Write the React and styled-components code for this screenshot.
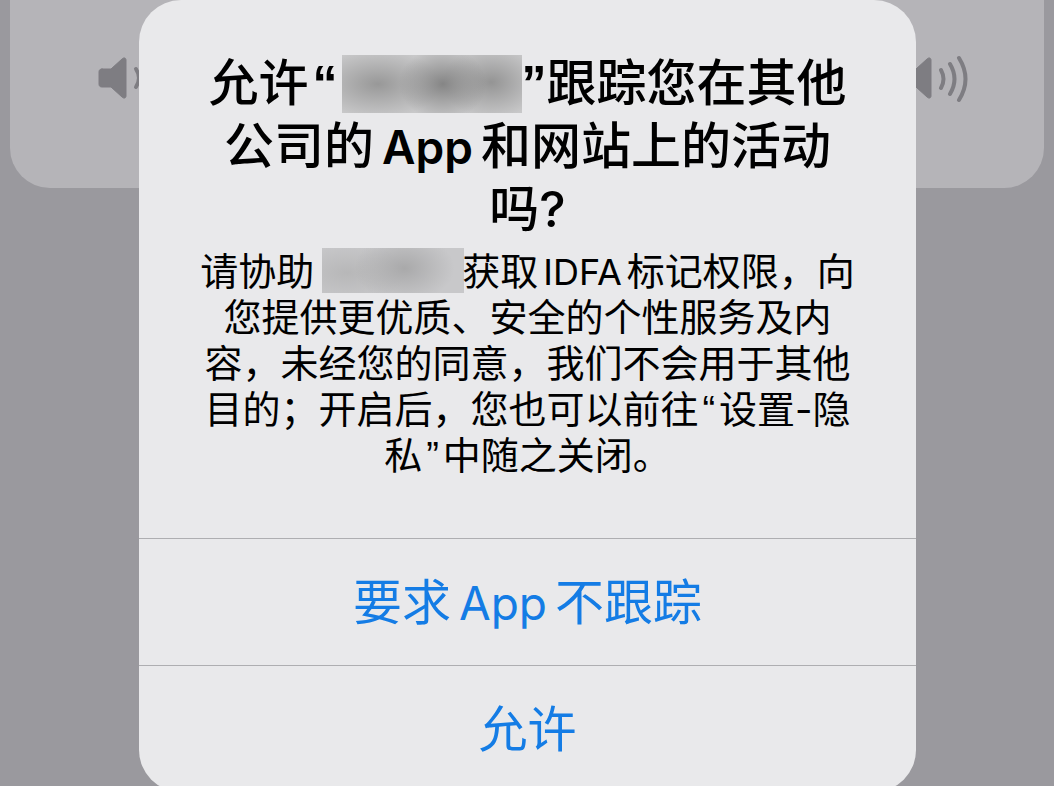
import React from "react";
import styled, { createGlobalStyle } from "styled-components";

const GlobalStyle = createGlobalStyle`
  * {
    box-sizing: border-box;
  }

  body {
    margin: 0;
    background: #9a999e;
    font-family: Inter, "Noto Sans CJK SC", sans-serif;
  }
`;

const Screen = styled.div`
  display: grid;
  align-items: start;
  min-height: 100vh;
  overflow: hidden;
`;

const VolumePanel = styled.section`
  grid-area: 1 / 1;
  display: flex;
  justify-content: space-between;
  align-items: flex-start;
  height: 188px;
  margin: 0 10px;
  padding: 52px 73px 0 84px;
  border-radius: 0 0 40px 40px;
  background: #b5b4b8;
`;

const SpeakerIcon = styled.svg`
  width: 72px;
  height: 52px;
  fill: #7e7d82;
  stroke: #7e7d82;
  stroke-linecap: round;
  stroke-linejoin: round;
`;

const Dialog = styled.main`
  grid-area: 1 / 1;
  margin: 0 138px 0 139px;
  border-radius: 42px;
  background: #e9e9eb;
  overflow: hidden;
`;

const Message = styled.div`
  height: 538px;
  padding-top: 52px;
  color: #000;
  text-align: center;
  white-space: nowrap;
`;

const Title = styled.h1`
  margin: 0;
  font-size: 50px;
  font-weight: 500;
  line-height: 63px;
`;

const Description = styled.p`
  margin: 7px 0 0;
  font-size: 38px;
  line-height: 46px;
`;

const Latin = styled.span`
  margin: 0 ${(props) => (props.$large ? "8px" : "5px")};
  font-size: ${(props) => (props.$large ? "46px" : "36px")};
  font-weight: ${(props) => (props.$bold ? 600 : 400)};
  line-height: 1;
`;

const Quote = styled.span`
  margin: 0 ${(props) => (props.$flush ? "0" : "4px")};
  font-family: "Liberation Sans", sans-serif;
  font-weight: ${(props) => (props.$bold ? 700 : 400)};
  line-height: 1;
`;

const HiddenName = styled.span`
  display: inline-block;
  vertical-align: top;
  width: ${(props) => (props.$large ? "180px" : "142px")};
  height: ${(props) => (props.$large ? "58px" : "45px")};
  margin: ${(props) => (props.$large ? "3px 0 0" : "0 -2px 0 8px")};
  background: ${(props) =>
    props.$large
      ? `radial-gradient(ellipse 44px 36px at 56% 50%, #858585 0%, transparent 100%),
         radial-gradient(ellipse 64px 34px at 20% 50%, #989898 0%, transparent 100%),
         radial-gradient(ellipse 50px 36px at 83% 47%, #949494 0%, transparent 100%),
         #c8c8c9`
      : `radial-gradient(ellipse 50px 34px at 58% 45%, #a9a9aa 0%, transparent 100%),
         radial-gradient(ellipse 60px 30px at 18% 55%, #b7b7b8 0%, transparent 100%),
         #c8c8ca`};
`;

const ActionButton = styled.button`
  display: block;
  width: 100%;
  height: 127px;
  padding: 0;
  border: 0;
  border-top: 1px solid #aeaeb1;
  background: transparent;
  color: #147ce5;
  font-family: inherit;
  font-size: 49px;
  line-height: 63px;
`;

function Speaker({ children }) {
  return (
    <SpeakerIcon viewBox="0 0 72 52" aria-hidden="true">
      <path
        d="M8 17h9l11-10c2-2 4-1 4 1v36c0 2-2 3-4 1L17 35H8c-2 0-3-1-3-3V20c0-2 1-3 3-3z"
        strokeWidth="1"
      />
      {children}
    </SpeakerIcon>
  );
}

function App() {
  return (
    <>
      <GlobalStyle />
      <Screen lang="zh-CN">
        <VolumePanel>
          <Speaker>
            <path d="M42 17q6 9 0 18" fill="none" strokeWidth="4" />
          </Speaker>
          <Speaker>
            <path
              d="M42 18q5 9 0 18M51 12q9 15 0 30M60 6q13 21 0 42"
              fill="none"
              strokeWidth="4"
            />
          </Speaker>
        </VolumePanel>
        <Dialog>
          <Message>
            <Title>
              允许<Quote $bold>“</Quote>
              <HiddenName $large />
              <Quote $bold $flush>
                ”
              </Quote>
              跟踪您在其他
              <br />
              公司的
              <Latin $large $bold>
                App
              </Latin>
              和网站上的活动
              <br />
              吗?
            </Title>
            <Description>
              请协助
              <HiddenName />
              获取<Latin>IDFA</Latin>标记权限，向
              <br />
              您提供更优质、安全的个性服务及内
              <br />
              容，未经您的同意，我们不会用于其他
              <br />
              目的；开启后，您也可以前往<Quote>“</Quote>设置-隐
              <br />
              私<Quote>”</Quote>中随之关闭。
            </Description>
          </Message>
          <ActionButton type="button">
            要求<Latin $large>App</Latin>不跟踪
          </ActionButton>
          <ActionButton type="button">允许</ActionButton>
        </Dialog>
      </Screen>
    </>
  );
}

export default App;
